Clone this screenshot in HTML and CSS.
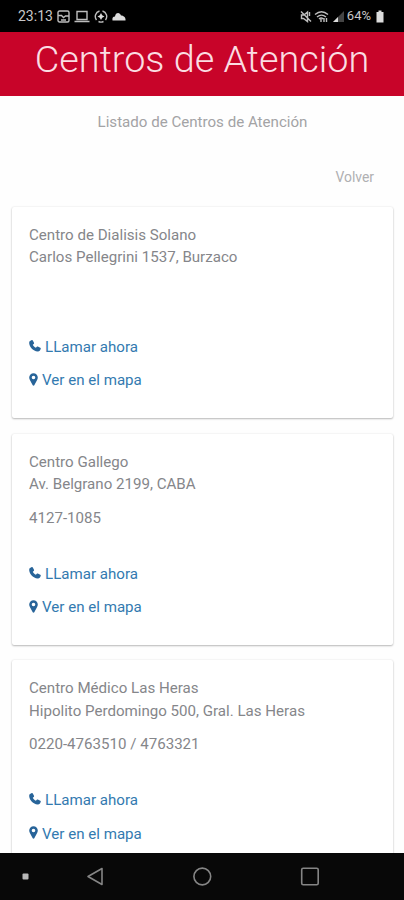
FILE: index.html
```html
<!DOCTYPE html>
<html lang="es">
<head>
  <meta charset="UTF-8" />
  <meta name="viewport" content="width=device-width,initial-scale=1.0" />
  <title>Centros de Atención</title>
  <link rel="stylesheet" href="styles.css">
</head>
<body>
  <svg class="sprite" width="0" height="0">
    <symbol id="phone" viewBox="0 0 12 12">
      <path d="M.6 1.300 2.800.1c.5-.2.8 0 1 .4l1.200 2.300c.2.5 0 .8-.3 1.100l-.9.8c.7 1.400 1.700 2.400 3.100 3.100l.9-1c.3-.3.6-.4 1-.2l2.500 1.200c.4.2.6.5.4 1-.5 1.900-1.500 2.800-3.100 2.600C4.200 11.100.6 7.300.2 3.200c0-.8 0-1.300.4-1.900z"/>
    </symbol>
    <symbol id="pin" viewBox="0 0 9 13">
      <path fill-rule="evenodd" d="M4.500.2a4.300 4.300 0 0 1 4.300 4.300c0 1-.3 1.700-.7 2.600L5.300 12.200c-.3.6-1.300.6-1.600 0L.9 7.100C.5 6.200.2 5.500.2 4.500A4.300 4.300 0 0 1 4.500.2zm0 2.500a1.800 1.800 0 1 0 0 3.600 1.800 1.800 0 0 0 0-3.600z"/>
    </symbol>
  </svg>

  <div class="phone-screen">
    <div class="status-bar">
      <div class="status-left">
        <span class="clock">23:13</span>
        <svg width="13" height="13" viewBox="0 0 13 13"><rect x="1" y="1" width="11" height="11" rx="1.500"/><path d="M1 5.500h3.500l2 2 2-1.500H12M4 10h5"/></svg>
        <svg width="16" height="13" viewBox="0 0 16 13"><path d="M3 1.500h10v8H3zM.5 11.500h15"/></svg>
        <svg width="14" height="13" viewBox="0 0 14 13"><path d="M5.500 1a5.700 5.700 0 0 0-3 9M4.500 11.500a5.700 5.700 0 0 0 5 0M8.500 1a5.700 5.700 0 0 1 3 9"/><path class="solid" d="M7 3l1.200 2.200 2.300 1.300-2.300 1.300L7 10 5.800 7.800 3.500 6.500l2.300-1.300z"/></svg>
        <svg width="14" height="13" viewBox="0 0 14 13"><path class="solid" d="M.5 10.500C0 8 1 6.500 3 6.500 3.500 2 8 2 9 5.500c3 0 5 2.500 4.500 5z"/></svg>
      </div>
      <div class="status-right">
        <svg width="12" height="13" viewBox="0 0 12 13"><path d="M1.500 5v3.500h2L7.500 11.500V2L4 5zM1 1.500l10 10M9.500 2v4"/></svg>
        <svg class="wifi" width="15" height="13" viewBox="0 0 15 13"><path d="M1 4.500c4-3.500 9-3.500 13 0M3 7c3-2.500 6-2.500 9 0M5 9c1.500-1.300 3-1.300 4 0M7 9v3M10 12V8M12.500 8v4"/></svg>
        <svg class="signal" width="14" height="13" viewBox="0 0 14 13"><path class="faint" d="M2 12 13 1v11z"/><path class="solid" d="M2 12l5-5v5z"/></svg>
        <span class="percent">64%</span>
        <svg class="battery" width="8" height="13" viewBox="0 0 8 13"><path class="solid" d="M2.500.5h3V2H7.500v10.500h-7V2h2z"/></svg>
      </div>
    </div>

    <header class="page-header">
      <h1>Centros de Atención</h1>
    </header>

    <main class="content">
      <p class="subtitle">Listado de Centros de Atención</p>
      <a class="back">Volver</a>

      <div class="card">
        <p>Centro de Dialisis Solano<br>Carlos Pellegrini 1537, Burzaco</p>
        <p class="tel"></p>
        <p><a class="link"><svg class="icon-phone"><use href="#phone"/></svg>LLamar ahora</a></p>
        <p><a class="link"><svg class="icon-pin"><use href="#pin"/></svg>Ver en el mapa</a></p>
      </div>

      <div class="card">
        <p>Centro Gallego<br>Av. Belgrano 2199, CABA</p>
        <p class="tel">4127-1085</p>
        <p><a class="link"><svg class="icon-phone"><use href="#phone"/></svg>LLamar ahora</a></p>
        <p><a class="link"><svg class="icon-pin"><use href="#pin"/></svg>Ver en el mapa</a></p>
      </div>

      <div class="card">
        <p>Centro Médico Las Heras<br>Hipolito Perdomingo 500, Gral. Las Heras</p>
        <p class="tel">0220-4763510 / 4763321</p>
        <p><a class="link"><svg class="icon-phone"><use href="#phone"/></svg>LLamar ahora</a></p>
        <p><a class="link"><svg class="icon-pin"><use href="#pin"/></svg>Ver en el mapa</a></p>
      </div>
    </main>

    <nav class="nav-bar">
      <svg width="404" height="47" viewBox="0 0 404 47">
        <rect class="dot" x="22.500" y="20.500" width="6" height="6" rx="1"/>
        <path d="M102 15.500v16L88 23.500z"/>
        <circle cx="202.300" cy="23.500" r="8.400"/>
        <rect x="301.700" y="15.200" width="16.500" height="16.500" rx="1.500"/>
      </svg>
    </nav>
  </div>
</body>
</html>
```

FILE: styles.css
```css
* {
  box-sizing: border-box;
}
body {
  margin: 0;
  background: #fff;
  font-family: Roboto, Arial, sans-serif;
  font-size: 15.1px;
  line-height: 22.4px;
  color: #85868a;
}
.sprite {
  display: block;
}
.phone-screen {
  display: flex;
  flex-direction: column;
  height: 900px;
  overflow: hidden;
}
.status-bar {
  flex: none;
  display: flex;
  justify-content: space-between;
  align-items: center;
  height: 32px;
  padding: 1px 20px 0 18px;
  background: #000;
  color: #c8c8c8;
  font-size: 14px;
}
.status-left,
.status-right {
  display: flex;
  align-items: center;
  gap: 4px;
}
.status-right {
  gap: 2px;
  font-size: 13px;
}
.status-bar svg {
  fill: none;
  stroke: #bdbdbd;
  stroke-width: 1.4;
}
.status-bar .solid {
  fill: #dcdcdc;
  stroke: none;
}
.status-bar .faint {
  fill: #444;
  stroke: none;
}
.battery {
  margin-left: 3px;
}
.page-header {
  flex: none;
  height: 64px;
  background: #c80429;
  text-align: center;
}
.page-header h1 {
  margin: 0;
  padding-top: 5px;
  color: #fbdde2;
  font-size: 37.8px;
  font-weight: 300;
  line-height: 44px;
}
.content {
  flex: 1;
  min-height: 0;
  overflow: hidden;
  padding: 15px 11px 0 12px;
  background: #fefefe;
}
.subtitle {
  margin: 0;
  text-align: center;
  color: #a3a3a5;
}
.back {
  display: block;
  margin: 33px 19px 18px 0;
  text-align: right;
  font-size: 13.9px;
  color: #b0b0b2;
}
.card {
  height: 211px;
  margin-bottom: 15.7px;
  padding: 17px 17px 0;
  background: #fff;
  border-radius: 2px;
  box-shadow: 0 1px 2px rgba(0,0,0,0.26), 0 0 2px rgba(0,0,0,0.1);
}
.card p {
  margin: 0 0 11.2px;
}
.card .tel {
  min-height: 22.4px;
  margin-bottom: 33.6px;
}
.link {
  display: flex;
  align-items: center;
  color: #337ab0;
}
.link svg {
  position: relative;
  top: -1px;
  fill: #286499;
}
.icon-phone {
  width: 12px;
  height: 12px;
  margin-right: 4px;
}
.icon-pin {
  width: 9px;
  height: 13px;
  margin-right: 4px;
}
.nav-bar {
  flex: none;
  height: 47px;
  background: #080808;
}
.nav-bar svg {
  display: block;
  fill: none;
  stroke: #858585;
  stroke-width: 1.6;
  stroke-linejoin: round;
}
.nav-bar .dot {
  fill: #b8b8b8;
  stroke: none;
}
```
